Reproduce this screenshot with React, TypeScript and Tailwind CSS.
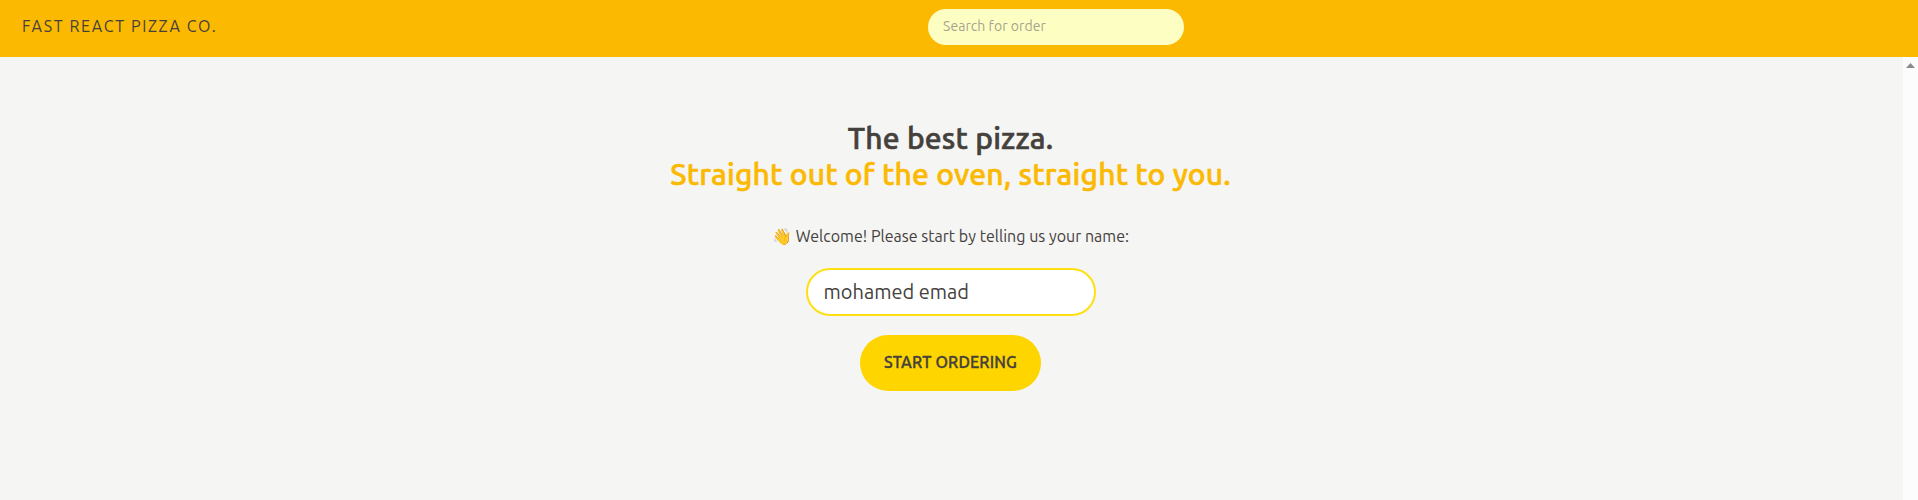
import { useState } from "react";

function Header() {
  return (
    <header className="flex h-[57px] shrink-0 items-start bg-[#fbb902] pt-[9px]">
      <a className="w-[928px] shrink-0 pl-[22px] pt-[5px] text-base leading-6 tracking-[1.6px] whitespace-nowrap uppercase">
        Fast React Pizza Co.
      </a>
      <input
        placeholder="Search for order"
        className="h-9 w-64 rounded-full bg-[#fdffc2] pr-4 pb-0.5 pl-[15px] text-sm tracking-[0.05px] outline-none placeholder:text-[#a8a290]"
      />
    </header>
  );
}

function CreateUser() {
  const [name, setName] = useState("mohamed emad");
  return (
    <form className="flex flex-col items-center">
      <p className="mb-5 text-base leading-6 tracking-[0.02px] whitespace-nowrap">
        👋 Welcome! Please start by telling us your name:
      </p>
      <input
        value={name}
        onChange={(e) => setName(e.target.value)}
        className="mb-[19px] h-12 w-[290px] rounded-full border-2 border-[#ffdf11] bg-white px-4 pb-0.5 text-xl outline-none"
      />
      <button className="h-14 w-[181px] rounded-full bg-[#ffd500] pb-0.5 text-base font-medium tracking-[0.13px] whitespace-nowrap uppercase [-webkit-text-stroke:0.35px_currentColor]">
        Start ordering
      </button>
    </form>
  );
}

function Scrollbar() {
  return (
    <div className="flex w-[15px] shrink-0 justify-center bg-[#fcfcfc] pt-[6px]">
      <svg width="9" height="5" viewBox="0 0 9 5" fill="#8b8b8b">
        <path d="M4.5 0L9 5H0z" />
      </svg>
    </div>
  );
}

export default function App() {
  return (
    <div className="flex h-[500px] w-full flex-col overflow-hidden bg-[#f5f5f4] font-['Ubuntu','Noto_Sans',sans-serif] text-[#44403c]">
      <Header />
      <div className="flex grow">
        <main className="grow pt-[63px] pr-0.5">
          <h1 className="mb-8 text-center text-3xl leading-9 font-medium tracking-[0.19px] [-webkit-text-stroke:0.6px_currentColor]">
            <span className="block">The best pizza.</span>
            <span className="block text-[#fbb902]">Straight out of the oven, straight to you.</span>
          </h1>
          <CreateUser />
        </main>
        <Scrollbar />
      </div>
    </div>
  );
}
